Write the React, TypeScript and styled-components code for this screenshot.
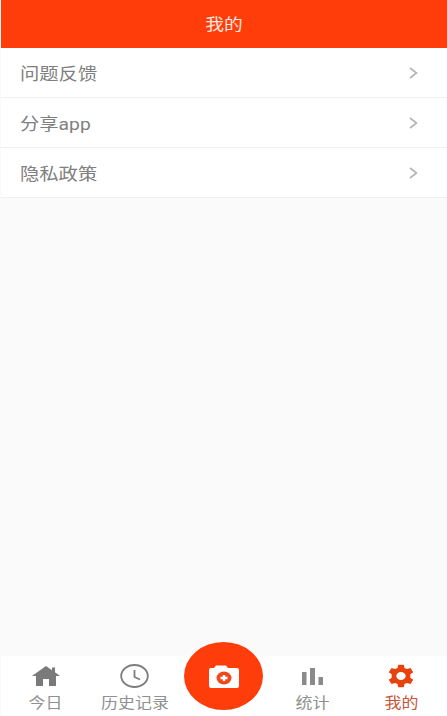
import React from "react";
import styled, { createGlobalStyle } from "styled-components";

const GlobalStyle = createGlobalStyle`
  html, body {
    margin: 0;
    padding: 0;
    height: 100%;
    background: #fafafa;
    font-family: Roboto, "Noto Sans CJK SC", sans-serif;
  }
  #root {
    height: 100%;
  }
`;

const Page = styled.div`
  display: flex;
  flex-direction: column;
  height: 716px;
  width: 447px;
  overflow: hidden;
  padding-left: 1px;
  box-sizing: border-box;
  background: #fafafa;
`;

const Header = styled.header`
  flex: none;
  height: 48px;
  padding-bottom: 2px;
  box-sizing: border-box;
  display: flex;
  align-items: center;
  justify-content: center;
  background: #ff3d0a;
  color: #fde6de;
  font-size: 16px;
`;

/* the screenshot is stretched sideways, so the text is too */
const Wide = styled.span`
  display: inline-block;
  transform: scaleX(1.17);
`;

const RowLabel = styled(Wide)`
  transform-origin: left center;
`;

const Menu = styled.ul`
  list-style: none;
  margin: 0;
  padding: 0;
  flex: 1;
`;

const MenuRow = styled.li`
  height: 50px;
  box-sizing: border-box;
  display: flex;
  align-items: center;
  justify-content: space-between;
  padding: 0 29px 0 19px;
  background: #fff;
  border-bottom: 1px solid #f0f0f0;
  color: #808080;
  font-size: 16.5px;
`;

const TabBar = styled.nav`
  flex: none;
  height: 60px;
  display: grid;
  grid-template-columns: 89px 89px 89px 89px 88px;
  background: #fff;
  position: relative;
`;

const Tab = styled.div<{ $active?: boolean }>`
  display: flex;
  flex-direction: column;
  align-items: center;
  justify-content: flex-end;
  gap: 3px;
  color: ${(p) => (p.$active ? "#c8563a" : "#909090")};
  font-size: 14.5px;
  line-height: 20px;
  padding-bottom: 2px;
`;

const IconSlot = styled.div`
  height: 30px;
  display: flex;
  align-items: center;
  justify-content: center;
`;

const CameraButton = styled.div`
  position: absolute;
  left: 183px;
  top: -14px;
  width: 79px;
  height: 68px;
  border-radius: 50%;
  background: #ff3d0a;
  display: flex;
  align-items: center;
  justify-content: center;
`;

const Chevron = () => (
  <svg width="9" height="12" viewBox="0 0 9 12" fill="none">
    <path d="M1 1 L7.5 6 L1 11" stroke="#b4b4b4" strokeWidth="1.6" />
  </svg>
);

const HomeIcon = () => (
  <svg width="28" height="20" viewBox="0 0 28 20">
    <path
      fill="#7a7a7a"
      d="M14 0 L20 4.2 V1.5 H23 V6.3 L28 10 H24 V20 H17 V13 H11 V20 H4 V10 H0 Z"
    />
  </svg>
);

const ClockIcon = () => (
  <svg width="29" height="24" viewBox="0 0 29 24" fill="none">
    <ellipse cx="14.5" cy="12" rx="13.3" ry="11" stroke="#7d7d7d" strokeWidth="1.8" />
    <path d="M14.5 6 V13 L20 15.5" stroke="#7d7d7d" strokeWidth="1.8" />
  </svg>
);

const ChartIcon = () => (
  <svg width="21" height="17" viewBox="0 0 21 17">
    <rect x="0" y="4" width="4.5" height="13" fill="#8a8a8a" />
    <rect x="8" y="0" width="5" height="17" fill="#8a8a8a" />
    <rect x="16.5" y="9" width="4.5" height="8" fill="#8a8a8a" />
  </svg>
);

const GearIcon = () => (
  <svg width="28" height="24" viewBox="0 0 24 24" preserveAspectRatio="none">
    <path
      fill="#e8430f"
      fillRule="evenodd"
      d="M9.6 0.8 H14.4 L15 4 L17 5.1 L20.1 4 L22.5 8.2 L20 10.3 V13.7 L22.5 15.8 L20.1 20 L17 18.9 L15 20 L14.4 23.2 H9.6 L9 20 L7 18.9 L3.9 20 L1.5 15.8 L4 13.7 V10.3 L1.5 8.2 L3.9 4 L7 5.1 L9 4 Z M12 8 A4 4 0 1 0 12 16 A4 4 0 1 0 12 8 Z"
    />
  </svg>
);

const CameraIcon = () => (
  <svg width="30" height="23" viewBox="0 0 30 23">
    <path
      fill="#fff"
      d="M2 3 H5 L7 0.5 H17 L19 3 H28 Q30 3 30 5 V21 Q30 23 28 23 H2 Q0 23 0 21 V5 Q0 3 2 3 Z"
    />
    <ellipse cx="15" cy="13" rx="7.5" ry="6.5" fill="#f0491c" />
    <path d="M11.5 13 H18.5 M15 10 V16" stroke="#fff" strokeWidth="2.4" />
  </svg>
);

const menuItems = ["问题反馈", "分享app", "隐私政策"];

function App() {
  return (
    <Page>
      <GlobalStyle />
      <Header>
        <Wide>我的</Wide>
      </Header>
      <Menu>
        {menuItems.map((item) => (
          <MenuRow key={item}>
            <RowLabel>{item}</RowLabel>
            <Chevron />
          </MenuRow>
        ))}
      </Menu>
      <TabBar>
        <Tab>
          <IconSlot>
            <HomeIcon />
          </IconSlot>
          <Wide>今日</Wide>
        </Tab>
        <Tab>
          <IconSlot>
            <ClockIcon />
          </IconSlot>
          <Wide>历史记录</Wide>
        </Tab>
        <div />
        <Tab>
          <IconSlot>
            <ChartIcon />
          </IconSlot>
          <Wide>统计</Wide>
        </Tab>
        <Tab $active>
          <IconSlot>
            <GearIcon />
          </IconSlot>
          <Wide>我的</Wide>
        </Tab>
        <CameraButton>
          <CameraIcon />
        </CameraButton>
      </TabBar>
    </Page>
  );
}

export default App;
